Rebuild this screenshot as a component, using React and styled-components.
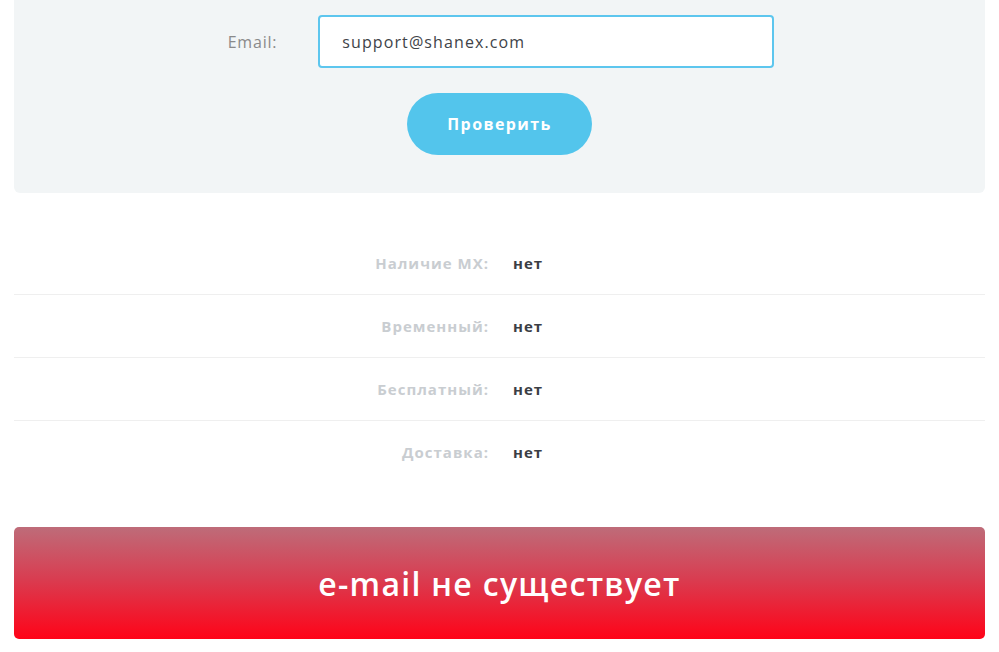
import React, { useState } from "react";
import styled, { createGlobalStyle } from "styled-components";

const GlobalStyle = createGlobalStyle`
  body {
    margin: 0;
    background: #ffffff;
    font-family: "Open Sans", "DejaVu Sans", sans-serif;
  }
`;

const Page = styled.div`
  padding: 0 14px 14px;
`;
const Panel = styled.div`
  background-color: #f2f5f6;
  border-radius: 0 0 6px 6px;
  padding: 15px 0 38px;
  display: flex;
  flex-direction: column;
  align-items: center;
`;
const FormRow = styled.div`
  display: flex;
  flex-direction: row;
  align-items: center;
  justify-content: center;
  gap: 41px;
  margin-left: 3px;
`;
const Label = styled.label`
  color: #8a8a8a;
  font-size: 16px;
  letter-spacing: 0.8px;
`;
const Input = styled.input`
  box-sizing: border-box;
  width: 456px;
  height: 53px;
  padding: 0 22px;
  border: 2px solid #5dc6ee;
  border-radius: 4px;
  background: #ffffff;
  color: #404348;
  font-family: inherit;
  font-size: 16px;
  letter-spacing: 1.1px;
  outline: none;
`;
const CheckButton = styled.button`
  margin-top: 25px;
  width: 185px;
  height: 62px;
  border: none;
  border-radius: 31px;
  background-color: #53c5ec;
  color: #ffffff;
  font-family: inherit;
  font-size: 16px;
  font-weight: bold;
  letter-spacing: 1.4px;
  cursor: pointer;
`;
const Results = styled.div`
  margin-top: 38px;
`;
const ResultRow = styled.div`
  display: grid;
  grid-template-columns: 474px 1fr;
  column-gap: 25px;
  align-items: center;
  height: 63px;
  border-top: ${(p) => (p.$first ? "none" : "1px solid #efefef")};
  box-sizing: border-box;
  font-size: 15px;
  font-weight: bold;
  letter-spacing: 1px;
`;
const RowLabel = styled.span`
  text-align: right;
  color: #c9cdd1;
  margin-right: -1px;
`;
const RowValue = styled.span`
  color: #3b3e45;
`;
const Banner = styled.div`
  margin-top: 44px;
  height: 112px;
  border-radius: 5px;
  background: linear-gradient(to bottom, #be6c79 0%, #d83e52 45%, #ff0318 100%);
  display: flex;
  align-items: center;
  justify-content: center;
  color: #ffffff;
  font-size: 32px;
  font-weight: 600;
  letter-spacing: 1.3px;
`;

const rows = [
  ["Наличие MX:", "нет"],
  ["Временный:", "нет"],
  ["Бесплатный:", "нет"],
  ["Доставка:", "нет"],
];

function App() {
  const [email, setEmail] = useState("support@shanex.com");

  return (
    <Page>
      <GlobalStyle />
      <Panel>
        <FormRow>
          <Label>Email:</Label>
          <Input value={email} onChange={(e) => setEmail(e.target.value)} />
        </FormRow>
        <CheckButton>Проверить</CheckButton>
      </Panel>
      <Results>
        {rows.map(([label, value], index) => (
          <ResultRow key={index} $first={index === 0}>
            <RowLabel>{label}</RowLabel>
            <RowValue>{value}</RowValue>
          </ResultRow>
        ))}
      </Results>
      <Banner>e-mail не существует</Banner>
    </Page>
  );
}

export default App;
